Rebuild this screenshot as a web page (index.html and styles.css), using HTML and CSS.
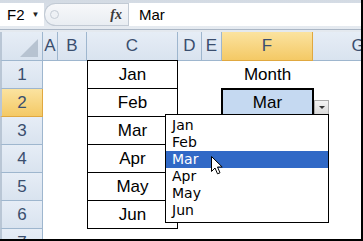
FILE: index.html
```html
<!DOCTYPE html>
<html lang="en">
<head>
    <meta charset="UTF-8">
    <title>Month drop-down</title>
    <link rel="stylesheet" href="styles.css">
</head>
<body>
    <div class="window">
        <div class="formula-bar">
            <div class="name-box"><span>F2</span><span class="caret">&#9660;</span></div>
            <div class="fx-panel"><span class="knob"></span><span class="fx">fx</span></div>
            <div class="formula-input">Mar</div>
        </div>
        <div class="sheet">
            <div class="row head-row">
                <div class="corner">
                    <svg width="18" height="18" viewBox="0 0 18 18"><polygon points="18,0 18,18 0,18" fill="#b7c3d1"/></svg>
                </div>
                <div class="col-head a">A</div>
                <div class="col-head b">B</div>
                <div class="col-head c">C</div>
                <div class="col-head d">D</div>
                <div class="col-head e">E</div>
                <div class="col-head f active">F</div>
                <div class="col-head g">G</div>
            </div>
            <div class="row">
                <div class="row-head">1</div>
                <div class="cell a"></div><div class="cell b"></div>
                <div class="cell c boxed first">Jan</div>
                <div class="cell d"></div><div class="cell e"></div>
                <div class="cell f">Month</div>
                <div class="cell g"></div>
            </div>
            <div class="row">
                <div class="row-head active">2</div>
                <div class="cell a"></div><div class="cell b"></div>
                <div class="cell c boxed">Feb</div>
                <div class="cell d"></div><div class="cell e"></div>
                <div class="cell f selected">Mar
                    <div class="drop-button"><span></span></div>
                </div>
                <div class="cell g"></div>
            </div>
            <div class="row">
                <div class="row-head">3</div>
                <div class="cell a"></div><div class="cell b"></div>
                <div class="cell c boxed">Mar</div>
                <div class="cell d"></div><div class="cell e"></div><div class="cell f"></div><div class="cell g"></div>
            </div>
            <div class="row">
                <div class="row-head">4</div>
                <div class="cell a"></div><div class="cell b"></div>
                <div class="cell c boxed">Apr</div>
                <div class="cell d"></div><div class="cell e"></div><div class="cell f"></div><div class="cell g"></div>
            </div>
            <div class="row">
                <div class="row-head">5</div>
                <div class="cell a"></div><div class="cell b"></div>
                <div class="cell c boxed">May</div>
                <div class="cell d"></div><div class="cell e"></div><div class="cell f"></div><div class="cell g"></div>
            </div>
            <div class="row">
                <div class="row-head">6</div>
                <div class="cell a"></div><div class="cell b"></div>
                <div class="cell c boxed">Jun</div>
                <div class="cell d"></div><div class="cell e"></div><div class="cell f"></div><div class="cell g"></div>
            </div>
            <div class="row">
                <div class="row-head">7</div>
                <div class="cell a"></div><div class="cell b"></div><div class="cell c"></div>
                <div class="cell d"></div><div class="cell e"></div><div class="cell f"></div><div class="cell g"></div>
            </div>
        </div>

        <ul class="list">
            <li>Jan</li>
            <li>Feb</li>
            <li class="hover">Mar</li>
            <li>Apr</li>
            <li>May</li>
            <li>Jun</li>
        </ul>

        <svg class="cursor" width="13" height="19" viewBox="0 0 13 19">
            <path d="M0.5,0.5 L0.5,15.5 L4,12 L6.5,17.8 L9,16.8 L6.5,11 L11.2,11 Z" fill="#fff" stroke="#000" stroke-width="1"/>
        </svg>
    </div>
</body>
</html>
```

FILE: styles.css
```css
body {
    margin: 0;
    padding: 0;
    font-family: "Liberation Sans", Arial, sans-serif;
    background-color: #fff;
}
.window {
    position: relative;
    width: 361px;
    height: 239px;
    border-right: 2px solid #000;
    border-bottom: 2px solid #000;
    overflow: hidden;
}

/* formula bar */
.formula-bar {
    display: flex;
    height: 23px;
    padding: 3px 0 3px 0;
    background: linear-gradient(#d3dae3, #e6ebf1);
    border-bottom: 1px solid #aab6c5;
}
.name-box {
    width: 44px;
    display: flex;
    align-items: center;
    gap: 7px;
    padding-left: 7px;
    box-sizing: border-box;
    background-color: #fff;
    font-size: 15px;
    color: #000;
}
.name-box .caret {
    font-size: 8px;
    color: #222;
}
.fx-panel {
    width: 84px;
    display: flex;
    align-items: center;
    justify-content: space-between;
    padding: 0 6px 0 5px;
    box-sizing: border-box;
    background: linear-gradient(#f7f8fa, #e9edf2);
    border: 1px solid #c2cad4;
    border-right: none;
    border-radius: 12px 0 0 12px;
}
.knob {
    width: 7px;
    height: 7px;
    border-radius: 50%;
    border: 1px solid #c5ccd5;
    background-color: #eef1f5;
}
.fx {
    font-family: "Liberation Serif", serif;
    font-style: italic;
    font-weight: bold;
    font-size: 14px;
    color: #3a3a3a;
}
.formula-input {
    flex: 1;
    display: flex;
    align-items: center;
    padding-left: 10px;
    background-color: #fff;
    border-left: 1px solid #c2cad4;
    font-size: 15px;
}

/* sheet grid */
.sheet {
    display: flex;
    flex-direction: column;
}
.row {
    display: flex;
    height: 28px;
}
.row > div {
    flex-shrink: 0;
}
.head-row {
    height: 29px;
    border-top: 2px solid #e4e9ef;
}
.corner,
.row-head,
.col-head {
    box-sizing: border-box;
    background: linear-gradient(#e6edf6, #d9e3ef);
    border-right: 1px solid #9eb6ce;
    border-bottom: 1px solid #9eb6ce;
    color: #3a4e6e;
    font-size: 17px;
    display: flex;
    align-items: center;
    justify-content: center;
}
.corner {
    width: 43px;
    align-items: flex-end;
    justify-content: flex-end;
    padding: 0 4px 3px 0;
    border-left: 2px solid #b9c6d5;
}
.row-head {
    width: 43px;
    border-left: 2px solid #b9c6d5;
}
.col-head.active,
.row-head.active {
    background: linear-gradient(#fbe3a0, #f4c965);
    border-right-color: #e0a840;
    border-bottom-color: #e0a840;
}
.a { width: 15px; }
.b { width: 29px; }
.c { width: 91px; }
.d { width: 24px; }
.e { width: 20px; }
.f { width: 91px; }
.g { width: 91px; }

.cell {
    position: relative;
    box-sizing: border-box;
    display: flex;
    align-items: center;
    justify-content: center;
    font-size: 17px;
    color: #000;
}
.cell.boxed {
    border-left: 1px solid #000;
    border-right: 1px solid #000;
    border-bottom: 1px solid #000;
}
.cell.boxed.first {
    margin-top: -1px;
    height: 29px;
    border-top: 1px solid #000;
}
.cell.selected {
    background-color: #c5d9f1;
    box-shadow: 0 0 0 1px #000, inset 0 0 0 1px #000;
    z-index: 1;
}

/* validation arrow button */
.drop-button {
    position: absolute;
    left: 92px;
    top: 11px;
    width: 15px;
    height: 15px;
    box-sizing: border-box;
    border: 1px solid #a9a9a9;
    background: linear-gradient(#f4f4f4, #d9d9d9);
    display: flex;
    align-items: center;
    justify-content: center;
}
.drop-button span {
    width: 0;
    height: 0;
    border-left: 3px solid transparent;
    border-right: 3px solid transparent;
    border-top: 3px solid #333;
}

/* drop-down list */
.list {
    position: absolute;
    left: 165px;
    top: 114px;
    width: 164px;
    height: 109px;
    box-sizing: border-box;
    margin: 0;
    padding: 2px 0 0 0;
    list-style: none;
    background-color: #fff;
    border: 1px solid #000;
    z-index: 2;
    font-family: "DejaVu Sans", sans-serif;
    font-size: 14px;
}
.list li {
    height: 17px;
    line-height: 17px;
    padding-left: 6px;
    color: #000;
}
.list li.hover {
    background-color: #3169c6;
    color: #fff;
}
.cursor {
    position: absolute;
    left: 211px;
    top: 156px;
    z-index: 3;
}
```
